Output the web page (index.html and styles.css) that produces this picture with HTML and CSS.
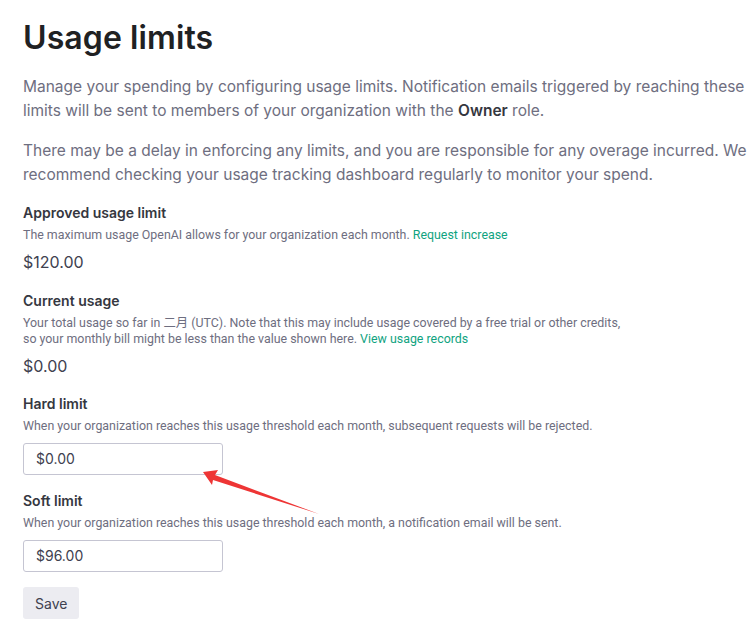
FILE: index.html
```html
<!DOCTYPE html>
<html>
<head>
<meta charset="utf-8">
<link rel="stylesheet" href="styles.css">
</head>
<body>
<div class="page">
  <h1 class="title">Usage limits</h1>
  <p class="intro">Manage your spending by configuring usage limits. Notification emails triggered by reaching these<br>limits will be sent to members of your organization with the <b>Owner</b> role.</p>
  <p class="intro">There may be a delay in enforcing any limits, and you are responsible for any overage incurred. We<br>recommend checking your usage tracking dashboard regularly to monitor your spend.</p>

  <section class="block first">
    <div class="label">Approved usage limit</div>
    <div class="desc">The maximum usage OpenAI allows for your organization each month. <a class="link">Request increase</a></div>
    <div class="value">$120.00</div>
  </section>

  <section class="block">
    <div class="label">Current usage</div>
    <div class="desc">Your total usage so far in 二月 (UTC). Note that this may include usage covered by a free trial or other credits,<br>so your monthly bill might be less than the value shown here. <a class="link">View usage records</a></div>
    <div class="value">$0.00</div>
  </section>

  <section class="block hard">
    <div class="label">Hard limit</div>
    <div class="desc">When your organization reaches this usage threshold each month, subsequent requests will be rejected.</div>
    <div class="input">$0.00</div>
  </section>

  <section class="block after-input">
    <div class="label">Soft limit</div>
    <div class="desc">When your organization reaches this usage threshold each month, a notification email will be sent.</div>
    <div class="input">$96.00</div>
  </section>

  <button class="save">Save</button>
</div>
<svg class="arrow" width="130" height="60" viewBox="0 0 130 60">
  <polygon points="8,11 23,9 20,14 124,53 18,19 17,24" fill="#ee3535"/>
</svg>
</body>
</html>
```
FILE: styles.css
```css
html, body {
  margin: 0;
  padding: 0;
  background: #ffffff;
}
body {
  font-family: Inter, "Noto Sans", "Noto Sans CJK SC", sans-serif;
  color: #353740;
  position: relative;
  width: 754px;
  height: 642px;
  overflow: hidden;
}
.page {
  padding: 18px 0 0 23px;
}
.title {
  margin: 0 0 17px 0;
  font-size: 32px;
  line-height: 40px;
  font-weight: 600;
  color: #202123;
  letter-spacing: 0.1px;
}
.intro {
  margin: 0 0 16px 0;
  font-size: 15.5px;
  line-height: 24px;
  color: #6e6e80;
  white-space: nowrap;
}
.intro b {
  font-weight: 600;
  color: #353740;
}
.label {
  font-size: 14px;
  line-height: 20px;
  font-weight: 600;
  color: #353740;
  margin-top: 17px;
}
.first .label { margin-top: 0; }
.hard .label { margin-top: 16px; }
.after-input .label { margin-top: 16px; }
.desc {
  font-family: Roboto, "Noto Sans", "Noto Sans CJK SC", sans-serif;
  font-size: 12.4px;
  line-height: 16px;
  color: #6e6e80;
  margin-top: 4px;
  white-space: nowrap;
}
.link {
  color: #10a37f;
  text-decoration: none;
}
.value {
  font-size: 16px;
  line-height: 24px;
  color: #40414f;
  margin-top: 7px;
}
.input {
  box-sizing: border-box;
  width: 200px;
  height: 32px;
  border: 1px solid #c5c5d2;
  border-radius: 3px;
  padding: 0 12px;
  font-size: 14px;
  line-height: 30px;
  color: #40414f;
  margin-top: 9px;
}
.save {
  margin-top: 15px;
  height: 32px;
  padding: 0 12px;
  border: none;
  border-radius: 3px;
  background: #ececf1;
  font-family: inherit;
  font-size: 14px;
  color: #40414f;
}
.arrow {
  position: absolute;
  left: 195px;
  top: 461px;
}
```
